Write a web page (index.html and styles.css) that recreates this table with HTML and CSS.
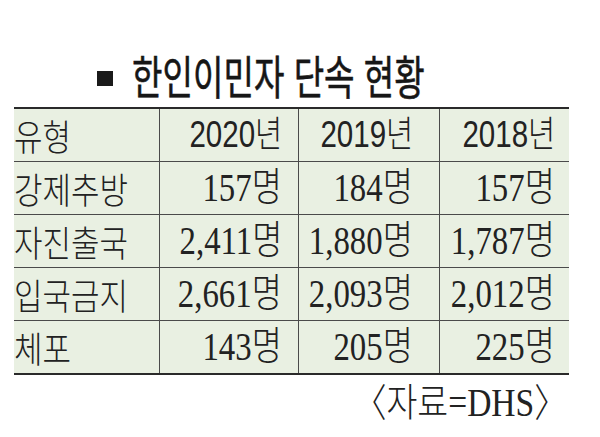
FILE: index.html
```html
<!DOCTYPE html>
<html lang="ko">
<head>
<meta charset="utf-8">
<link rel="stylesheet" href="styles.css">
</head>
<body>
<div class="page">
  <h1 class="title"><span class="bullet"></span><span class="title-text">한인이민자 단속 현황</span></h1>
  <div class="table">
    <div class="row head">
      <div class="cell label"><span class="sq">유형</span></div>
      <div class="cell c2"><span class="sq year">2020년</span></div>
      <div class="cell c3"><span class="sq year">2019년</span></div>
      <div class="cell c4"><span class="sq year">2018년</span></div>
    </div>
    <div class="row">
      <div class="cell label"><span class="sq">강제추방</span></div>
      <div class="cell c2"><span class="sq num">157명</span></div>
      <div class="cell c3"><span class="sq num">184명</span></div>
      <div class="cell c4"><span class="sq num">157명</span></div>
    </div>
    <div class="row">
      <div class="cell label"><span class="sq">자진출국</span></div>
      <div class="cell c2"><span class="sq num">2,411명</span></div>
      <div class="cell c3"><span class="sq num">1,880명</span></div>
      <div class="cell c4"><span class="sq num">1,787명</span></div>
    </div>
    <div class="row">
      <div class="cell label"><span class="sq">입국금지</span></div>
      <div class="cell c2"><span class="sq num">2,661명</span></div>
      <div class="cell c3"><span class="sq num">2,093명</span></div>
      <div class="cell c4"><span class="sq num">2,012명</span></div>
    </div>
    <div class="row last">
      <div class="cell label"><span class="sq">체포</span></div>
      <div class="cell c2"><span class="sq num">143명</span></div>
      <div class="cell c3"><span class="sq num">205명</span></div>
      <div class="cell c4"><span class="sq num">225명</span></div>
    </div>
  </div>
  <div class="source"><span class="sq src">〈자료=DHS〉</span></div>
</div>
</body>
</html>
```

FILE: styles.css
```css
html, body {
  margin: 0;
  padding: 0;
  background: #ffffff;
}

.page {
  width: 600px;
  height: 437px;
  overflow: hidden;
  color: #1e1e1e;
  font-family: "Noto Sans CJK KR", "Liberation Sans", sans-serif;
}

.title {
  margin: 0;
  height: 107px;
  box-sizing: border-box;
  padding-top: 46px;
  padding-left: 97px;
  display: flex;
  align-items: flex-start;
  font-weight: 400;
  font-size: 46px;
  line-height: 56px;
  color: #161616;
}

.bullet {
  width: 16px;
  height: 15px;
  background: #1a1a1a;
  margin-top: 25px;
  margin-right: 19px;
  flex: none;
}

.title-text {
  display: inline-block;
  white-space: nowrap;
  transform: scaleX(0.72);
  transform-origin: left center;
  -webkit-text-stroke: 0.6px #161616;
}

.table {
  margin-left: 14px;
  width: 555px;
  background: #e9f0e2;
  border-top: 2px solid #2a2a2a;
  border-bottom: 2px solid #2a2a2a;
}

.row {
  display: flex;
  height: 53px;
  border-bottom: 1px solid #4a4a4a;
  box-sizing: border-box;
}

.row.last {
  border-bottom: none;
  height: 52px;
}

.cell {
  display: flex;
  align-items: center;
  justify-content: flex-end;
  white-space: nowrap;
  box-sizing: border-box;
}

.cell.label {
  width: 145px;
  justify-content: flex-start;
}

.cell.c2 {
  width: 139px;
  border-left: 1px solid #4a4a4a;
  padding-right: 16px;
}

.cell.c3 {
  width: 141px;
  border-left: 1px solid #4a4a4a;
  padding-right: 26px;
}

.cell.c4 {
  width: 130px;
  border-left: 1px solid #4a4a4a;
  padding-right: 14px;
}

.sq {
  display: inline-block;
  flex: none;
  transform: scaleX(0.84);
  transform-origin: right center;
  font-size: 36px;
  line-height: 42px;
  font-weight: 300;
  color: #222;
}

.label .sq {
  transform-origin: left center;
  transform: scaleX(0.86);
}

.year {
  font-family: "Liberation Sans", "Noto Sans CJK KR", sans-serif;
  font-size: 36px;
  transform: scaleX(0.82);
}

.num {
  font-family: "Liberation Serif", "Noto Sans CJK KR", serif;
  font-size: 40px;
  transform: scaleX(0.82);
}

.source {
  display: flex;
  justify-content: flex-end;
  width: 568px;
  padding-top: 7px;
}

.src {
  font-family: "Liberation Serif", "Noto Sans CJK KR", serif;
  font-size: 39px;
  line-height: 42px;
  transform: scaleX(0.86);
}
```
